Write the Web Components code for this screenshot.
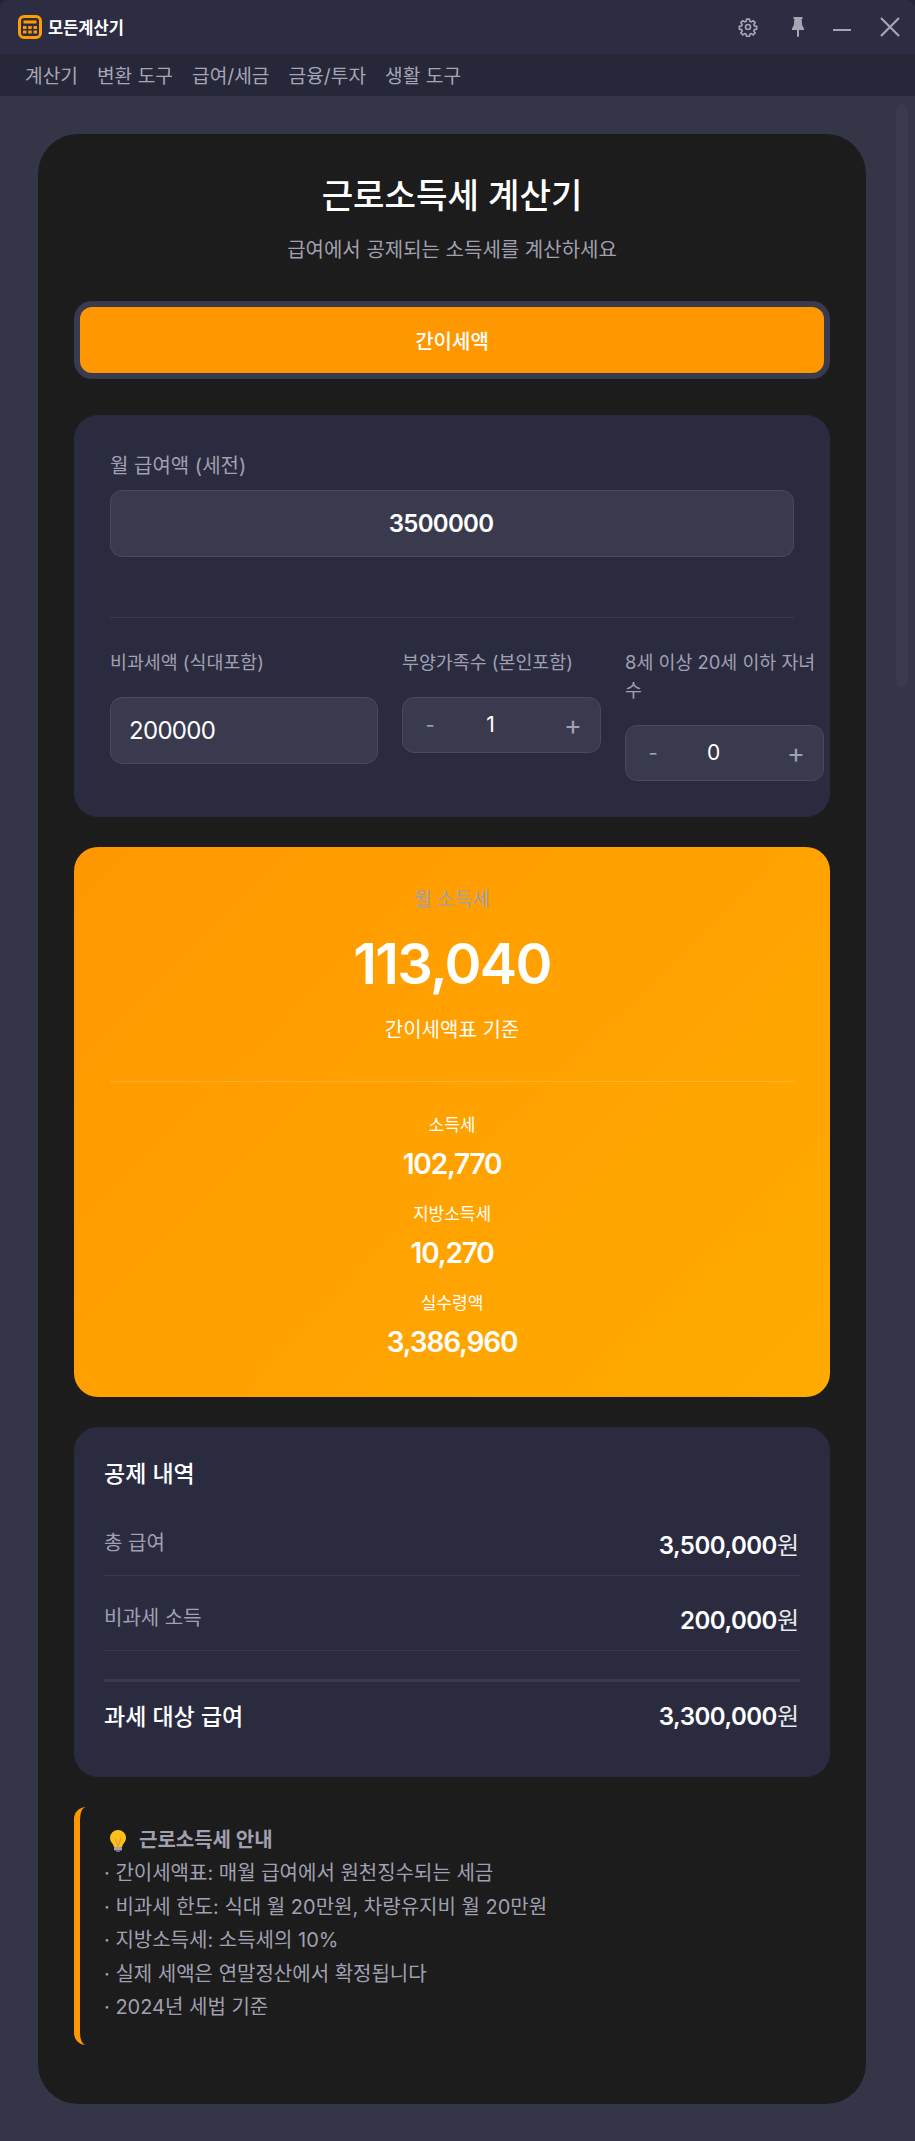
<!DOCTYPE html>
<html lang="ko">
<head>
<meta charset="utf-8">
<title>모든계산기</title>
<style>
html, body { margin: 0; padding: 0; background: #26263a; }
body {
    width: 915px;
    height: 2141px;
    overflow: hidden;
    font-family: Inter, "Noto Sans CJK KR", sans-serif;
    color: #fff;
}
</style>
</head>
<body>
<app-titlebar>모든계산기</app-titlebar>
<app-menu>
    <span>계산기</span>
    <span>변환 도구</span>
    <span>급여/세금</span>
    <span>금융/투자</span>
    <span>생활 도구</span>
</app-menu>
<app-scroll>
    <tax-card>
        <span slot="title">근로소득세 계산기</span>
        <span slot="subtitle">급여에서 공제되는 소득세를 계산하세요</span>
        <mode-tab slot="tabs">간이세액</mode-tab>

        <input-panel slot="panel">
            <salary-field slot="main" label="월 급여액 (세전)" value="3500000"></salary-field>
            <text-field slot="cols" label="비과세액 (식대포함)" value="200000"></text-field>
            <step-field slot="cols" label="부양가족수 (본인포함)" value="1"></step-field>
            <step-field slot="cols" label="8세 이상 20세 이하 자녀수" value="0"></step-field>
        </input-panel>

        <result-panel slot="panel" label="월 소득세" value="113,040" note="간이세액표 기준">
            <stat-item label="소득세" value="102,770"></stat-item>
            <stat-item label="지방소득세" value="10,270"></stat-item>
            <stat-item label="실수령액" value="3,386,960"></stat-item>
        </result-panel>

        <detail-panel slot="panel" heading="공제 내역">
            <detail-row label="총 급여" value="3,500,000"></detail-row>
            <detail-row label="비과세 소득" value="200,000"></detail-row>
            <detail-row slot="total" total label="과세 대상 급여" value="3,300,000"></detail-row>
        </detail-panel>

        <info-note slot="panel" heading="근로소득세 안내">
            <div>· 간이세액표: 매월 급여에서 원천징수되는 세금</div>
            <div>· 비과세 한도: 식대 월 20만원, 차량유지비 월 20만원</div>
            <div>· 지방소득세: 소득세의 10%</div>
            <div>· 실제 세액은 연말정산에서 확정됩니다</div>
            <div>· 2024년 세법 기준</div>
        </info-note>
    </tax-card>
</app-scroll>

<script>
function makeTemplate(html) {
    var t = document.createElement("template");
    t.innerHTML = html;
    return t;
}

class Base extends HTMLElement {
    connectedCallback() {
        if (this.shadowRoot) return;
        this.attachShadow({ mode: "open" });
        this.shadowRoot.appendChild(this.constructor.template.content.cloneNode(true));
        this.shadowRoot.querySelectorAll("[data-attr]").forEach(el => {
            el.textContent = this.getAttribute(el.dataset.attr);
        });
    }
}

class AppTitlebar extends Base {}
AppTitlebar.template = makeTemplate(`
<style>
:host { display: flex; align-items: center; height: 54px; background: #2c2c42; border-radius: 9px 9px 0 0; }
.logo { width: 24px; height: 24px; margin-left: 18px; margin-right: 6px; }
.name { font-size: 16.5px; font-weight: 700; color: #fff; }
.tools { margin-left: auto; display: flex; align-items: center; color: #a5a5b5; }
svg { display: block; }
.gear { margin-right: 34px; }
.pin { margin-right: 29px; }
.min { margin-right: 29px; margin-top: 6px; }
.close { margin-right: 15px; }
</style>
<svg class="logo" viewBox="0 0 24 24">
    <rect x="1.5" y="1.5" width="21" height="21" rx="4.5" fill="none" stroke="#ff9d00" stroke-width="3"/>
    <rect x="5.500" y="5.500" width="13" height="3" fill="#ff9d00"/>
    <rect x="5" y="11" width="3.500" height="3" fill="#ff9d00"/><rect x="10.250" y="11" width="3.500" height="3" fill="#ff9d00"/><rect x="15.500" y="11" width="3.500" height="3" fill="#ff9d00"/>
    <rect x="5" y="15.500" width="3.500" height="3" fill="#ff9d00"/><rect x="10.250" y="15.500" width="3.500" height="3" fill="#ff9d00"/><rect x="15.500" y="15.500" width="3.500" height="3" fill="#ff9d00"/>
</svg>
<span class="name"><slot></slot></span>
<div class="tools">
    <svg class="gear" width="20" height="20" viewBox="0 0 24 24" fill="none" stroke="currentColor" stroke-width="2" stroke-linejoin="round">
        <circle cx="12" cy="12" r="3"/>
        <path d="M10.3 2.5h3.4l.5 2.7 1.7.7 2.3-1.6 2.4 2.4-1.6 2.3.7 1.7 2.7.5v3.4l-2.7.5-.7 1.7 1.6 2.3-2.4 2.4-2.3-1.6-1.7.7-.5 2.7h-3.4l-.5-2.7-1.7-.7-2.3 1.6-2.4-2.4 1.6-2.3-.7-1.7-2.7-.5v-3.4l2.7-.5.7-1.7-1.6-2.3 2.4-2.4 2.3 1.6 1.7-.7z"/>
    </svg>
    <svg class="pin" width="12" height="20" viewBox="0 0 12 20" fill="currentColor">
        <path d="M1.5 0h9v2H9.600l.6 6.200L12 11.500V13H7v6.500L6 20l-1-.5V13H0v-1.500l1.800-3.300L2.400 2H1.500z"/>
    </svg>
    <svg class="min" width="18" height="4" viewBox="0 0 18 4"><rect y="1" width="18" height="2" fill="currentColor"/></svg>
    <svg class="close" width="20" height="20" viewBox="0 0 20 20" stroke="currentColor" stroke-width="2.200"><path d="M1 1l18 18M19 1L1 19"/></svg>
</div>
`);
customElements.define("app-titlebar", AppTitlebar);

class AppMenu extends Base {}
AppMenu.template = makeTemplate(`
<style>
:host { display: flex; align-items: center; gap: 19px; height: 42px; padding-left: 25px; background: #27273a; color: #a5a5b5; font-size: 19.2px; }
</style>
<slot></slot>
`);
customElements.define("app-menu", AppMenu);

class AppScroll extends Base {}
AppScroll.template = makeTemplate(`
<style>
:host { display: block; position: relative; padding: 38px 49px 38px 38px; background: #353548; }
.thumb { position: absolute; top: 8px; left: 896px; width: 12px; height: 583px; border-radius: 6px; background: #3a3a4e; }
</style>
<slot></slot>
<div class="thumb"></div>
`);
customElements.define("app-scroll", AppScroll);

class TaxCard extends Base {}
TaxCard.template = makeTemplate(`
<style>
:host { display: block; background: #1c1c1c; border-radius: 40px; padding: 39px 36px 59px; }
h1 { margin: 0; text-align: center; font-size: 34.2px; line-height: 46px; font-weight: 500; color: #fff; }
p { margin: 16px 0 36px; text-align: center; font-size: 20px; line-height: 30px; color: #a0a0b0; }
.stack { display: flex; flex-direction: column; gap: 30px; margin-top: 36px; }
</style>
<h1><slot name="title"></slot></h1>
<p><slot name="subtitle"></slot></p>
<slot name="tabs"></slot>
<div class="stack"><slot name="panel"></slot></div>
`);
customElements.define("tax-card", TaxCard);

class ModeTab extends Base {}
ModeTab.template = makeTemplate(`
<style>
:host { display: block; background: #3a3a4e; border-radius: 18px; padding: 6px; }
div { height: 66px; display: flex; align-items: center; justify-content: center; background: #ff9800; border-radius: 12px; color: #fff; font-size: 20px; font-weight: 500; }
</style>
<div><slot></slot></div>
`);
customElements.define("mode-tab", ModeTab);

class InputPanel extends Base {}
InputPanel.template = makeTemplate(`
<style>
:host { display: block; background: #2b2b40; border-radius: 24px; padding: 36px; }
hr { border: 0; height: 1px; background: #3a3a4e; margin: 60px 0 30px; }
.cols { display: flex; gap: 24px; width: 712px; }
</style>
<slot name="main"></slot>
<hr>
<div class="cols"><slot name="cols"></slot></div>
`);
customElements.define("input-panel", InputPanel);

class SalaryField extends Base {}
SalaryField.template = makeTemplate(`
<style>
:host { display: block; }
label { display: block; font-size: 20px; line-height: 30px; color: #a0a0b0; margin-bottom: 9px; }
div { box-sizing: border-box; height: 67px; padding-right: 22px; display: flex; align-items: center; justify-content: center; background: #3a3a4e; border: 1px solid #4a4a5e; border-radius: 12px; font-size: 24px; font-weight: 600; letter-spacing: -.7px; color: #fff; }
</style>
<label data-attr="label"></label>
<div data-attr="value"></div>
`);
customElements.define("salary-field", SalaryField);

class TextField extends Base {}
TextField.template = makeTemplate(`
<style>
:host { display: block; width: 268px; flex: none; }
label { display: block; font-size: 18.4px; line-height: 28px; color: #a0a0b0; margin-bottom: 21px; }
div { box-sizing: border-box; height: 67px; display: flex; align-items: center; padding-left: 18px; background: #3a3a4e; border: 1px solid #4a4a5e; border-radius: 12px; font-size: 24px; letter-spacing: -.7px; color: #fff; }
</style>
<label data-attr="label"></label>
<div data-attr="value"></div>
`);
customElements.define("text-field", TextField);

class StepField extends Base {}
StepField.template = makeTemplate(`
<style>
:host { display: block; width: 199px; flex: none; }
label { display: block; font-size: 18.4px; line-height: 28px; color: #a0a0b0; margin-bottom: 21px; }
.box { box-sizing: border-box; height: 56px; display: grid; grid-template-columns: 54px 1fr 54px; align-items: center; background: #3a3a4e; border: 1px solid #4a4a5e; border-radius: 12px; color: #a0a0b0; text-align: center; }
.minus { font-size: 20px; }
.plus { font-size: 27px; font-weight: 400; }
.num { font-size: 21px; color: #fff; padding-right: 22px; margin-top: -1px; }
</style>
<label data-attr="label"></label>
<div class="box">
    <span class="minus">-</span>
    <span class="num" data-attr="value"></span>
    <span class="plus">+</span>
</div>
`);
customElements.define("step-field", StepField);

class ResultPanel extends Base {}
ResultPanel.template = makeTemplate(`
<style>
:host { display: block; background: linear-gradient(135deg, #ff9800, #ffab00); border-radius: 24px; padding: 37px 36px 37px; text-align: center; color: #fff; }
.label { font-size: 19.2px; line-height: 30px; color: #a0a0b0; }
.value { font-size: 56px; line-height: 68px; font-weight: 600; letter-spacing: -1.7px; margin-top: 16px; }
.note { font-size: 20px; line-height: 30px; margin-top: 17px; }
hr { border: 0; height: 1px; background: rgba(255,255,255,.2); margin: 36px 0 31px; }
.stats { display: flex; flex-direction: column; gap: 20px; }
</style>
<div class="label" data-attr="label"></div>
<div class="value" data-attr="value"></div>
<div class="note" data-attr="note"></div>
<hr>
<div class="stats"><slot></slot></div>
`);
customElements.define("result-panel", ResultPanel);

class StatItem extends Base {}
StatItem.template = makeTemplate(`
<style>
:host { display: block; text-align: center; }
.label { font-size: 17px; line-height: 24px; }
.value { font-size: 28px; line-height: 36px; font-weight: 600; margin-top: 9px; letter-spacing: -1.2px; }
</style>
<div class="label" data-attr="label"></div>
<div class="value" data-attr="value"></div>
`);
customElements.define("stat-item", StatItem);

class DetailPanel extends Base {}
DetailPanel.template = makeTemplate(`
<style>
:host { display: block; background: #2b2b40; border-radius: 24px; padding: 32px 30px 23px; }
h3 { margin: 0 0 12px; font-size: 23px; line-height: 30px; font-weight: 500; color: #fff; }
.total { display: block; margin-top: 28px; border-top: 3px solid #3a3a4e; }
</style>
<h3 data-attr="heading"></h3>
<slot></slot>
<div class="total"><slot name="total"></slot></div>
`);
customElements.define("detail-panel", DetailPanel);

class DetailRow extends Base {}
DetailRow.template = makeTemplate(`
<style>
:host { display: flex; justify-content: space-between; align-items: flex-start; box-sizing: border-box; height: 75px; padding-top: 27px; border-bottom: 1px solid #3a3a4e; }
:host([total]) { height: 72px; padding-top: 17px; border-bottom: 0; }
.label { font-size: 20px; line-height: 30px; color: #a0a0b0; }
:host([total]) .label { font-size: 23px; line-height: 36px; font-weight: 500; color: #fff; }
.value { font-size: 24px; line-height: 36px; font-weight: 600; color: #fff; letter-spacing: -.5px; margin-right: 1px; }
.unit { font-weight: 400; letter-spacing: 0; font-size: 24px; color: #e8e8ee; }
</style>
<span class="label" data-attr="label"></span>
<span class="value"><span data-attr="value"></span><span class="unit">원</span></span>
`);
customElements.define("detail-row", DetailRow);

class InfoNote extends Base {}
InfoNote.template = makeTemplate(`
<style>
:host { display: block; border-left: 6px solid #ff9800; border-radius: 12px; padding: 20px 24px; font-size: 20px; line-height: 33.6px; color: #a0a0b0; }
.head { display: flex; align-items: center; height: 28px; margin-bottom: 2px; padding-left: 6px; gap: 13px; font-weight: 700; }
svg { display: block; }
</style>
<div class="head">
    <svg width="16" height="22" viewBox="0 0 16 22">
        <path d="M8 0a8 8 0 0 0-8 8c0 3 1.800 4.500 3 6.500.6 1 .7 1.500.8 2.500h8.400c.1-1 .2-1.500.8-2.500 1.200-2 3-3.500 3-6.500a8 8 0 0 0-8-8z" fill="#fcc21b"/>
        <path d="M5 8l3 9 3-9" fill="none" stroke="#f79329" stroke-width="1"/>
        <rect x="4" y="17" width="8" height="3.500" rx="1" fill="#a8a3a8"/>
        <rect x="6" y="20.500" width="4" height="1.500" rx=".7" fill="#7d6f8c"/>
    </svg>
    <span data-attr="heading"></span>
</div>
<slot></slot>
`);
customElements.define("info-note", InfoNote);
</script>
</body>
</html>
